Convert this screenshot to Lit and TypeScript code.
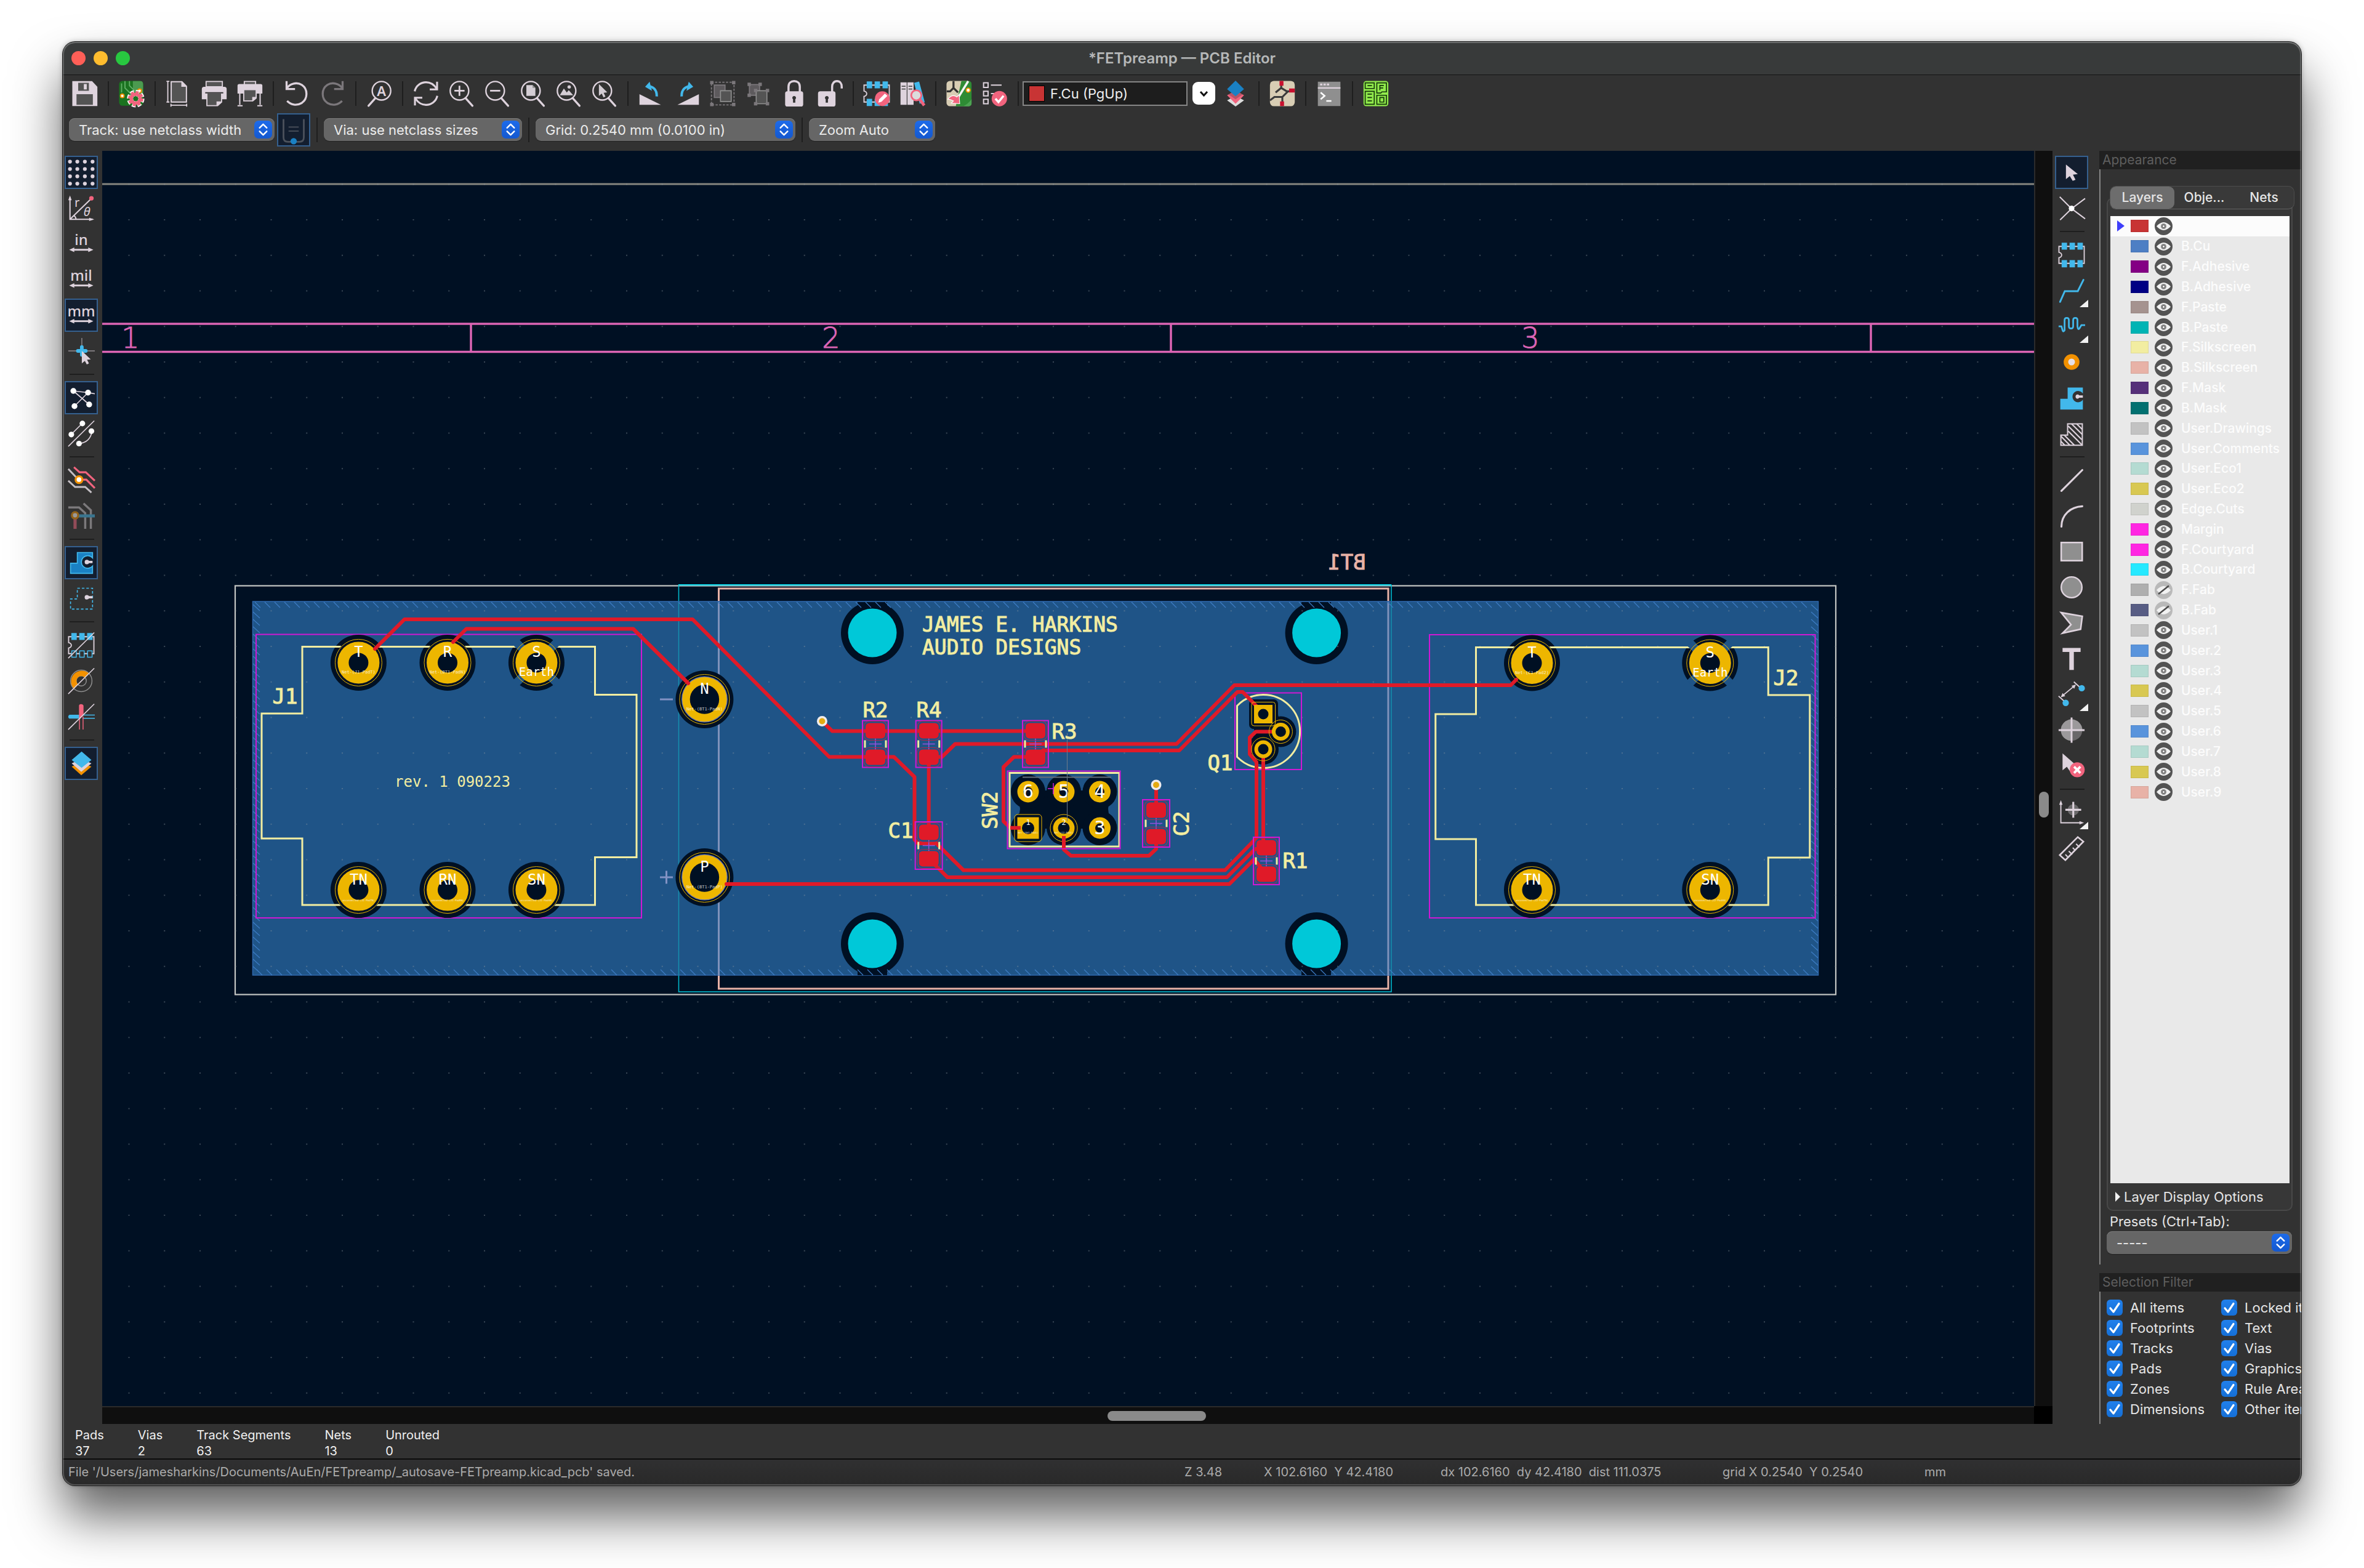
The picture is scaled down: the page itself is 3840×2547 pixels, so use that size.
import { LitElement, html, svg, css, nothing } from "lit";
import { customElement, property, state } from "lit/decorators.js";
import { classMap } from "lit/directives/class-map.js";
import { styleMap } from "lit/directives/style-map.js";

/* ---------- icon palette ---------- */
const W = "#ded3dd";
const G = "#8f8f8f";
const K = "#545454";
const B = "#42b8eb";
const DB = "#1a81c4";
const P = "#f2647e";
const O = "#f29100";

const magnifier = (inner: unknown, flip = false) => svg`
  <g fill="none" stroke=${W} stroke-width="1.3" stroke-linecap="round">
    <circle cx=${flip ? 14 : 10} cy="9.5" r="8.2"/>
    <path d=${flip ? "M8.6 16 2.5 22.8" : "M15.4 16 21.5 22.8"} stroke-width="1.8"/>
  </g>${inner}`;

const footprint = (extra: unknown, hollow = false) => svg`
  <path d="M3 4.5H.8v5.2q2.4.6 2.4 2.4T.8 14.5v5H23.2v-15z" fill="none" stroke=${W} stroke-width="1"/>
  <g fill=${B}><path d="M3.2 1.2h4.8v6.2H3.2zM10.2 1.2H15v6.2h-4.8zM17.2 1.2H22v6.2h-4.8z"/></g>
  <g fill=${hollow ? "#323232" : B} stroke=${B} stroke-width=".8"><path d="M3.6 17h4v5.6h-4zM10.6 17h4v5.6h-4zM17.6 17h4v5.6h-4z"/></g>${extra}`;

const slash = svg`<path d="M.5 23.5 23.5 .8" stroke=${W} stroke-width=".9"/>`;

const ICONS: Record<string, unknown> = {
  save: svg`<path d="M.8 1h17.5l4.7 5v17H.8z" fill=${W}/><path d="M6 2.5h9.5v7H6zM4.5 12.5h14.5v9.5H4.5z" fill=${K}/><path d="M11 3.5h2.6v4.8H11z" fill=${W}/>`,
  setup: svg`<rect x=".8" y=".8" width="21.5" height="22" rx="3" fill="#1b7320"/><path d="M13 1h7q2 0 2 3v10h-4l-5-5z" fill="#4c9a50"/>
    <g fill="none" stroke="#63b068" stroke-width="1"><path d="M6 1v6l5 5v4M10 1v4l5 5"/><path d="M3 3v8"/></g><circle cx="3.6" cy="14" r="1.6" fill="#fff" stroke=${O}/><circle cx="19" cy="9.5" r="1.6" fill="#fff" stroke=${O}/>
    <circle cx="15.5" cy="16.5" r="5" fill="none" stroke="#fff" stroke-width="5.5" stroke-dasharray="2.6 1.32"/><circle cx="15.5" cy="16.5" r="4" fill="none" stroke=${P} stroke-width="3"/><circle cx="15.5" cy="16.5" r="5.5" fill="none" stroke=${P} stroke-width="2.6" stroke-dasharray="2.4 1.92"/>`,
  page: svg`<path d="M5.5 1.5h9.5l4 4v14H5.5z" fill=${K} stroke=${W} stroke-width="1.1"/><path d="M14.5 1v5H19z" fill=${W}/><path d="M2.5 1.5v18M1.3 1.2h2.6M1.3 19.5h2.6M5.5 22.3h13.5M5.3 21v2.6M19.2 21v2.6" stroke=${W} stroke-width="1" fill="none"/>`,
  print: svg`<path d="M4.8 1.3h14.4V6H4.8z" fill=${K} stroke=${W}/><path d="M1 8q0-2 2-2h18q2 0 2 2v9H1z" fill=${W}/><path d="M5.5 11.5h13v8l-3.5 3.2H5.5z" fill=${K} stroke=${W}/><path d="M4 11.3h16" stroke="#323232"/><path d="M14 23v-4h5z" fill=${W}/>`,
  plot: svg`<path d="M7 1.3h10V4.5H7z" fill=${K} stroke=${W}/><path d="M1 5q0-1.5 1.5-1.5h19Q23 3.5 23 5v7H1z" fill=${W}/><path d="M6.5 8.5h11v7.5l-3 2.5h-8z" fill=${K} stroke=${W}/><path d="M14 19v-4h4z" fill=${W}/><path d="M3 12v10M21 12v10M1 22.8h4.5M18.5 22.8H23" stroke=${W} stroke-width="1.1"/>`,
  undo: svg`<path d="M3 7.5C6 3 12 1.5 16.5 4.3 22 8 22 16.5 16.5 20.3 12 23 6.5 22 3.5 18.5M3 1v7h7.5" fill="none" stroke=${W} stroke-width="1.8"/>`,
  redo: svg`<path d="M21 7.5C18 3 12 1.5 7.5 4.3 2 8 2 16.5 7.5 20.3 12 23 17.5 22 20.5 18.5M21 1v7h-7.5" fill="none" stroke="#7b777b" stroke-width="1.8"/>`,
  find: magnifier(svg`<text x="14" y="14" text-anchor="middle" class="itxt" font-size="12" font-weight="600" fill=${W}>A</text>`, true),
  refresh: svg`<path d="M2 10C3 5 7.5 2 12 2c4 0 7 2 9.3 5.5M21.8 1.5v6.8h-6.5M22 14c-1 5-5.5 8-10 8-4 0-7-2-9.3-5.5M2.2 22.5v-6.8h6.5" fill="none" stroke=${W} stroke-width="1.7"/>`,
  zin: magnifier(svg`<path d="M10 5v9M5.5 9.5h9" stroke=${W} stroke-width="1.5"/>`),
  zout: magnifier(svg`<path d="M5.5 9.5h9" stroke=${W} stroke-width="1.5"/>`),
  zfit: magnifier(svg`<path d="M6 4.5h5.5l2.5 2.5v7H6z" fill="#d4cdd4"/><path d="M11.5 4.5v2.5H14z" fill="#8f8f8f"/>`),
  zobj: magnifier(svg`<path d="M4 13.5l3.6-6 2.6 3.5 1.7-2 4 4.5z" fill="#d4cdd4"/><circle cx="12.3" cy="6.2" r="1.5" fill="#d4cdd4"/>`),
  zsel: magnifier(svg`<path d="M7 3.5v10.5l2.5-2 1.6 3.4 1.7-.8-1.6-3.3 3.2-.4z" fill="#d4cdd4"/>`),
  rccw: svg`<path d="M1.5 12.5 20.5 22H1.5z" fill=${W}/><path d="M10.5 1.5 6.5 6l6 3.5z" fill=${B}/><path d="M8.5 5.5c5 0 8.5 3 8.3 9" fill="none" stroke=${B} stroke-width="2.2"/>`,
  rcw: svg`<path d="M22.5 12.5 3.5 22h19z" fill=${W}/><path d="M13.5 1.5 17.5 6l-6 3.5z" fill=${B}/><path d="M15.5 5.5c-5 0-8.5 3-8.3 9" fill="none" stroke=${B} stroke-width="2.2"/>`,
  group: svg`<path d="M2 2h20v20H2z" fill="none" stroke="#7b777b" stroke-dasharray="2 1.2"/><path d="M4.5 4.5h9.5v11H4.5z" fill="#5d5a5d" stroke="#7b777b"/><path d="M10 9.5h9.5V19H10z" fill=${K} stroke=${G} stroke-width=".9"/><path d="M.8.8h3v3h-3zM20.2.8h3v3h-3zM.8 20.2h3v3h-3zM20.2 20.2h3v3h-3z" fill="#7b777b"/>`,
  ungroup: svg`<path d="M4 4h9v9.5H4z" fill="#5d5a5d" stroke="#7b777b"/><path d="M10 9.5h9.5V21H10z" fill=${K} stroke=${G} stroke-width=".9"/><path d="M2.3 2.3h3v3h-3zM12 2.3h3v3h-3zM2.3 12h3v3h-3zM8 7.8h3v3H8zM18.5 7.8h3v3h-3zM8 19.5h3v3H8zM18.5 19.5h3v3h-3z" fill="#7b777b"/>`,
  lock: svg`<path d="M7 11V5.8C7 2.6 9.2 1 12 1s5 1.6 5 4.8V11" fill="none" stroke=${W} stroke-width="1.9"/><rect x="4" y="10" width="16" height="13.5" rx="2" fill=${W}/><path d="M12 14.2a1.6 1.6 0 0 1 1 2.9V20h-2v-2.9a1.6 1.6 0 0 1 1-2.9z" fill="#323232"/>`,
  unlock: svg`<path d="M14 11V6c0-3 1.7-5 4.3-5s4.2 2 4.2 5v1.5" fill="none" stroke=${W} stroke-width="1.9"/><rect x="1.5" y="10" width="15.5" height="13.5" rx="2" fill=${W}/><path d="M9.3 14.2a1.6 1.6 0 0 1 1 2.9V20h-2v-2.9a1.6 1.6 0 0 1 1-2.9z" fill="#323232"/>`,
  fpedit: footprint(svg`<circle cx="17" cy="16.5" r="6.5" fill=${P}/><path d="M13.5 20l.8-3 5-5 2.2 2-5.2 5.2z" fill="#fff"/>`),
  fplib: svg`<path d="M1.5 2h5.5v20H1.5zM7.6 2h5.5v20H7.6z" fill=${W}/><path d="M2.5 5.5h3.5M2.5 8h3.5M8.6 5.5H12M8.6 8H12" stroke=${K}/><path d="M13.5 2.5l4.5-1.2 5 18.5-4.5 1.2z" fill=${B}/><circle cx="15.5" cy="13.5" r="4.5" fill="#dcdcdc" stroke=${P} stroke-width="1.5"/><path d="M18.5 17l4 5.5" stroke=${P} stroke-width="2.6"/>`,
  update: svg`<rect x=".8" y=".8" width="22" height="22.4" rx="3" fill="#d8cdb4"/><path d="M14 .8h6q3 0 3 3v16.5q0 3-3 3H9z" fill="#2e8b34"/><path d="M16 23q4-2 7-6v4q0 2-3 2.2z" fill="#4da352"/><path d="M7 1v6l-3 3H1M7 7l4 4" fill="none" stroke="#323232" stroke-width="1.8"/><path d="M20 1 9 19" stroke="#f4f4f4" stroke-width="2"/><path d="M2 17q4-5 8-2l2-2 .5 8-7.5-.5 2-2q-3-1.5-5-1.5z" fill=${P} stroke="#fff" stroke-width=".6"/><circle cx="20" cy="9" r="1.8" fill="#fff" stroke=${O}/>`,
  drc: svg`<path d="M2 2.5h4v4H2zM2 10h4v4H2zM2 17h4v4H2z" fill="none" stroke=${W} stroke-width="1.1"/><path d="M8.5 4.5H18M8.5 12H13" stroke=${W} stroke-width="1.2"/><circle cx="16" cy="16.5" r="6.8" fill=${P}/><path d="M12.5 16.5l2.7 3 4.5-5.5" fill="none" stroke="#fff" stroke-width="1.9"/>`,
  pair: svg`<path d="M12 14 19.5 18 12 23.5 4.5 18z" fill="#dcdcdc"/><path d="M12 9l7.5 4.5L12 21l-7.5-7.5z" fill=${P}/><path d="M12 5l7.5 7L12 17 4.5 12z" fill="#323232" opacity=".3"/><path d="M12 .5 19.5 8 12 14.5 4.5 8z" fill=${DB}/>`,
  sch: svg`<rect x="1" y=".8" width="22" height="22.4" rx="3.5" fill="#d8cdb4"/><path d="M11 1v6l-5 4M11 7l5 3h6M12 15l5-5M12 15v8M12 15H5l-4 3" fill="none" stroke="#3b3b3b" stroke-width="1.7"/><path d="M9.5.8H13V5H9.5zM18 7.5h5V11h-5zM10 19h3.5v4H10z" fill="#c8102e"/>`,
  term: svg`<path d="M2 1.5h20V23H2z" fill=${G}/><path d="M2 7h20" stroke=${W} stroke-width="1.3"/><path d="M4 4h2M7 4h2M10 4h2" stroke=${W} stroke-width="1.6"/><path d="M4.5 11l3.5 3-3.5 3M9.5 18.5h4.5" fill="none" stroke="#fff" stroke-width="1.4"/>`,
  fab: svg`<rect x="1" y=".8" width="22" height="22.4" rx="2.5" fill="#91ea4c"/><g fill="none" stroke="#14360a" stroke-width=".9"><path d="M2.5 2.5h8v5h-8zM2.5 10h8v11.5h-8zM12.8 2.5h8.5v8h-4l-1 1h-3.5zM12.8 13.5h8.5v8h-8.5z"/><path d="M4.5 5h4M4.5 12.5h4M4.5 15.5h4M4.5 18.5h4M15.5 9V4.8h3.5M15.5 7h3M15.5 15.5h3.5v4h-3.5z"/></g>`,
  autow: svg`<path d="M3 2.5v16q0 4 4 4h10q4 0 4-4v-16" fill="none" stroke="#4c525c" stroke-width="1.5"/><path d="M7.5 9.5h9M7.5 13h9" stroke="#4c525c" stroke-width="1"/><circle cx="12" cy="22" r="2.8" fill=${DB}/>`,
  grid: svg`<g fill=${W}>${[2.5, 9, 15.5, 22].map((y) => [2, 8.5, 15.2, 22].map((x) => svg`<circle cx=${x} cy=${y} r="1.7"/>`))}</g>`,
  polar: svg`<path d="M2 2.5V22H22M2 22 20.5 4M5 18.5q2.3 1 2.3 3.5" fill="none" stroke=${W} stroke-width="1.1"/><path d="M2 .8 3.5 5H.5zM23.5 22l-4.5 1.4v-2.8z" fill=${W}/><circle cx="21" cy="3.3" r="2" fill=${P}/><text x="6" y="11" class="itxt" font-size="11" fill=${W}>r</text><text x="14" y="19" class="itxt" font-size="11" font-style="italic" fill=${W}>θ</text>`,
  curs: svg`<path d="M12.5.5V12M.5 12H24" stroke="#7b777b"/><path d="M12.5 8.5v7M9 12h7" stroke=${B} stroke-width="3.2" stroke-linecap="round"/><path d="M12.5 12v11l2.7-2.2 1.7 3.2 1.9-1-1.7-3.2 3.3-.3z" fill=${W}/>`,
  rats: svg`<path d="M5 6l13 1.5 6 1M5 6l14 12M18 7.5 6 19.5" stroke=${W} stroke-width=".9" fill="none"/><g fill="#fff"><circle cx="5" cy="6" r="2.6"/><circle cx="18" cy="7.5" r="2.6"/><circle cx="6" cy="19.5" r="2.6"/><circle cx="19" cy="18" r="2.6"/></g>`,
  crats: svg`<path d="M3 13 13 3M.5 23.5 23.5.8M10 21q10-1 11.5-11" stroke=${W} stroke-width=".9" fill="none"/><g fill="#fff"><circle cx="3.2" cy="13" r="2.5"/><circle cx="13" cy="3.2" r="2.5"/><circle cx="10" cy="21" r="2.5"/><circle cx="21" cy="10" r="2.5"/></g>`,
  net: svg`<path d="M.5 2 9 11M.5 12.5 6.500 18h9l5.500 5" fill="none" stroke="#c4bfc4" stroke-width="1.6"/><path d="M5.5.5 10.5 5H16l8 7.500M11 11.500h5.500L24 19" fill="none" stroke=${P} stroke-width="1.7"/><circle cx="10" cy="11.5" r="3" fill="#fff" stroke=${O} stroke-width="1.8"/>`,
  hidenet: svg`<g opacity=".5"><path d="M.5 4.5h9.5l5.5 5V23.5M14 1l6.5 6v16.5" fill="none" stroke="#c4bfc4" stroke-width="1.9"/><path d="M6.5 12H24" stroke=${B} stroke-width="2.6"/><path d="M6.5 12v11.5" stroke=${P} stroke-width="2.8"/><circle cx="6.5" cy="11.5" r="2.8" fill="#fff" stroke=${O} stroke-width="1.8"/></g>`,
  zfill: svg`<path d="M8.5 3H22v4.8a5.6 5.6 0 1 0 0 7.2v6.5H2.5v-9h6z" fill=${DB} stroke=${B} stroke-width=".9"/><path d="M17 9.4q1.2 0 1.9 1H22v2h-3.1q-.7 1-1.9 1a2 2 0 0 1 0-4z" fill=${W}/>`,
  zout2: svg`<path d="M8.5 3H22v18.5H2.5v-9h6z" fill="none" stroke=${B} stroke-width=".9" stroke-dasharray="2.3 1.7"/><path d="M17 9q1.2 0 1.9 1H22v2h-3.1q-.7 1-1.9 1a2 2 0 0 1 0-4z" fill=${W}/>`,
  fpo: footprint(slash, true),
  padso: svg`<circle cx="12" cy="12" r="9.5" fill="none" stroke=${G} stroke-width=".8"/><circle cx="12" cy="12" r="4.5" fill="none" stroke=${G} stroke-width=".8"/><path d="M5.3 18.7A9.5 9.5 0 0 1 18.7 5.3L15 9a4.2 4.2 0 0 0-6 6z" fill=${O}/>${slash}`,
  trko: svg`<path d="M2 10.3h9v3.5H2q-1.5 0-1.5-1.7T2 10.3z" fill=${B}/><path d="M13 10.6H24M13 13.5H24" stroke=${B} stroke-width=".8"/><path d="M10 12V2.5q0-1.5 1.8-1.5t2.2 1.5V11l-4 4z" fill=${P}/><path d="M10.4 14v9.5M13.6 12v11.5" stroke=${P} stroke-width=".8"/>${slash}`,
  layers: svg`<path d="M12 11l9 3.8L12 22.5 3.5 14.8z" fill=${O}/><path d="M12 8l9 4L12 19.5 3.5 12z" fill=${W}/><path d="M12.3 1.5 21 9l-8.7 7L3.5 9z" fill=${B}/>`,
  arrow: svg`<path d="M7 5v13l3.4-2.7 2.6 4.2 2.5-1-2.3-4.5 4.3-.5z" fill=${W}/>`,
  xnet: svg`<path d="M1.5 2 12 12.5 1.8 22.5M24 3.5 12 12.5 24 21.5" fill="none" stroke=${W} stroke-width="1.1"/><circle cx="12" cy="12.3" r="2.5" fill="#fff"/>`,
  foot: footprint(nothing),
  route: svg`<path d="M1.8 22 6 12.5h11.5L22.5 2.5" fill="none" stroke=${B} stroke-width="1.6" stroke-linecap="round"/>`,
  tune: svg`<path d="M.5 12H3l1 3.5q.5 2 1.8 0V6.5q0-2 1.9-2t1.9 2V12q0 2 1.9 2t1.9-2V6.5q0-2 1.9-2t1.9 2V12q.5 4 2 1.500l1.500-2.500H24" fill="none" stroke=${B} stroke-width="1.5"/>`,
  via: svg`<circle cx="12" cy="12" r="5" fill="#e6e0e6" stroke=${O} stroke-width="4"/>`,
  zone: svg`<path d="M8.5 3H22v5.3a5 5 0 1 0 0 5.5V22.5H2V13h6.5z" fill=${B}/><path d="M17 9.2q1.2 0 1.8.8H22v2h-3.2q-.6.9-1.8.9a1.9 1.9 0 0 1 0-3.7z" fill=${W}/>`,
  rule: svg`<path d="M8.5 3.5h13v19H2.5v-9h6z" fill="none" stroke=${W} stroke-width="1.1"/><path d="M9 5.5 21 17.5M12 3.5l9.5 9.5M16.5 3.5 21.5 8.5M9 10l12 12M5.5 13.5l9 9M2.5 14.5l8 8M2.5 19l3.5 3.5" stroke=${W} stroke-width="1.2"/>`,
  line: svg`<path d="M3 21.5 21.5 3" stroke=${W} stroke-width="1.7" stroke-linecap="round"/>`,
  arc: svg`<path d="M3 21.5C3 11 11 4 21.5 3.5" fill="none" stroke=${W} stroke-width="1.7" stroke-linecap="round"/>`,
  rect: svg`<path d="M2.8 4h18.6v16H2.8z" fill=${G} stroke=${W} stroke-width="1.4"/>`,
  circle: svg`<circle cx="12" cy="12" r="9.2" fill=${G} stroke=${W} stroke-width="1.3"/>`,
  poly: svg`<path d="M2.8 2.8 21.5 6 20 17.5 4 21l7.5-7.5z" fill=${G} stroke=${W} stroke-width="1.4"/>`,
  text: svg`<path d="M4 2.5h16v3.5h-6v16h-4V6H4z" fill=${W}/>`,
  dim: svg`<path d="M3 14 15 4M.5 13.5l5.5 5M14 .8l6 5.5" stroke=${W} stroke-width="1" fill="none"/><path d="M2.5 14.5 4 10.8l2.4 2.7zM15.8 3.3l-1.5 3.7-2.4-2.7z" fill=${W}/><circle cx="6.8" cy="19.5" r="2.8" fill=${B}/><circle cx="21" cy="6.5" r="2.8" fill=${B}/>`,
  target: svg`<circle cx="12" cy="12" r="9.5" fill="#6a686a"/><path d="M2.5 12A9.5 9.5 0 0 1 21.5 12z" fill="#9b999b"/><path d="M2.5 12h9.5v9.5A9.5 9.5 0 0 1 2.5 12z" fill="#9b999b"/><path d="M12 .8v22.4M.5 12h23" stroke=${W} stroke-width="1.6"/>`,
  del: svg`<path d="M4 1v15l3.8-3.2 3.2 4.7 2.5-1.2-2.2-4.3 4.7-.5z" fill=${W}/><circle cx="17" cy="15.5" r="6.6" fill=${P}/><path d="M14.2 12.7l5.6 5.6M19.8 12.7l-5.6 5.6" stroke="#fff" stroke-width="2.1"/>`,
  origin: svg`<path d="M2.5 3v18H21" fill="none" stroke=${W} stroke-width="1"/><path d="M2.5 1 4 5H1zM23 21l-4 1.5v-3z" fill=${W}/><circle cx="13.5" cy="9.5" r="5" fill="#6a686a"/><path d="M13.5 2.5v14M6.5 9.5h14" stroke=${W} stroke-width="1.7"/>`,
  ruler: svg`<path d="M1.5 18 17.5 2l5 4L6.5 22.500z" fill="none" stroke=${W} stroke-width="1.4"/><path d="M6.5 17.5l2 2M9.5 14.5l3 3M13 11.500l2 2M16 8l3 3" stroke=${W} stroke-width="1.1"/>`,
};

const unitIcon = (label: string) => svg`
  <text x="12" y="13" text-anchor="middle" class="itxt" font-size="13" font-weight="500" fill=${W}>${label}</text>
  <path d="M4 17.3h16" stroke=${W} stroke-width="1.6"/><path d="M1.3 17.3l4.500-2v4zM22.700 17.3l-4.500-2v4z" fill=${W}/>`;
ICONS.in = unitIcon("in");
ICONS.mil = unitIcon("mil");
ICONS.mm = unitIcon("mm");

interface Tool { icon?: string; label?: string; on?: boolean; more?: boolean }
const SEP: Tool = {};
const t = (icon: string, label: string, opt: Partial<Tool> = {}): Tool => ({ icon, label, ...opt });

const TOP_TOOLS: Tool[] = [
  t("save", "Save"), SEP, t("setup", "Board setup"), SEP,
  t("page", "Page settings"), t("print", "Print"), t("plot", "Plot"), SEP,
  t("undo", "Undo"), t("redo", "Redo"), SEP, t("find", "Find"), SEP,
  t("refresh", "Refresh"), t("zin", "Zoom in"), t("zout", "Zoom out"), t("zfit", "Zoom to fit"),
  t("zobj", "Zoom to objects"), t("zsel", "Zoom to selection"), SEP,
  t("rccw", "Rotate counterclockwise"), t("rcw", "Rotate clockwise"), t("group", "Group"),
  t("ungroup", "Ungroup"), t("lock", "Lock"), t("unlock", "Unlock"), SEP,
  t("fpedit", "Footprint editor"), t("fplib", "Footprint library browser"), SEP,
  t("update", "Update PCB from schematic"), t("drc", "Design rules checker"), SEP,
];
const TOP_TOOLS_END: Tool[] = [
  t("pair", "Layer pair"), SEP, t("sch", "Open schematic"), SEP,
  t("term", "Scripting console"), SEP, t("fab", "Fabrication files"),
];
const LEFT_TOOLS: Tool[] = [
  t("grid", "Show grid", { on: true }), t("polar", "Polar coordinates"), t("in", "Inches"),
  t("mil", "Mils"), t("mm", "Millimeters", { on: true }), t("curs", "Full-window crosshairs"), SEP,
  t("rats", "Show ratsnest", { on: true }), t("crats", "Curved ratsnest"), SEP,
  t("net", "Net highlighting"), t("hidenet", "Net color mode"), SEP,
  t("zfill", "Filled zones", { on: true }), t("zout2", "Zone outlines"), SEP,
  t("fpo", "Sketch footprints"), t("padso", "Sketch pads"), t("trko", "Sketch tracks"), SEP,
  t("layers", "Appearance manager", { on: true }),
];
const RIGHT_TOOLS: Tool[] = [
  t("arrow", "Select", { on: true }), t("xnet", "Local ratsnest"), SEP,
  t("foot", "Add footprint"), t("route", "Route tracks", { more: true }),
  t("tune", "Tune length", { more: true }), t("via", "Add via"), t("zone", "Add zone"), t("rule", "Add rule area"), SEP,
  t("line", "Draw line"), t("arc", "Draw arc"), t("rect", "Draw rectangle"), t("circle", "Draw circle"),
  t("poly", "Draw polygon"), t("text", "Add text"), t("dim", "Add dimension", { more: true }),
  t("target", "Layer alignment target"), t("del", "Interactive delete"), SEP,
  t("origin", "Set origin", { more: true }), t("ruler", "Measure"),
];

const LAYERS: [string, string, boolean?][] = [
  ["F.Cu", "#c83434"], ["B.Cu", "#4d7fc4"], ["F.Adhesive", "#840084"], ["B.Adhesive", "#000084"],
  ["F.Paste", "#a5938f"], ["B.Paste", "#00b4b4"], ["F.Silkscreen", "#f2eda1"], ["B.Silkscreen", "#e8b2a7"],
  ["F.Mask", "#56307a"], ["B.Mask", "#027070"], ["User.Drawings", "#c2c2c2"], ["User.Comments", "#5994dc"],
  ["User.Eco1", "#b4dbd2"], ["User.Eco2", "#d8c852"], ["Edge.Cuts", "#d0d2cd"], ["Margin", "#ff26e2"],
  ["F.Courtyard", "#ff26e2"], ["B.Courtyard", "#26e9ff"], ["F.Fab", "#afafaf", true], ["B.Fab", "#585d84", true],
  ["User.1", "#c2c2c2"], ["User.2", "#5994dc"], ["User.3", "#b4dbd2"], ["User.4", "#d8c852"],
  ["User.5", "#c2c2c2"], ["User.6", "#5994dc"], ["User.7", "#b4dbd2"], ["User.8", "#d8c852"], ["User.9", "#e8b2a7"],
];

const buttonStyles = css`
  button, select, input { font: inherit; color: inherit; margin: 0; }
  button { border: 0; padding: 0; background: none; }
`;

@customElement("tool-button")
class ToolButton extends LitElement {
  @property() icon = "";
  @property() label = "";
  @property({ type: Boolean }) on = false;
  @property({ type: Boolean }) more = false;

  static styles = [buttonStyles, css`
    :host { display: block; flex: none; }
    .tool {
      position: relative; display: grid; place-items: center; box-sizing: border-box;
      width: 54px; height: 54px; border: 2px solid transparent;
    }
    .tool.on { background: #131e2f; border-color: #35608f; }
    .glyph { width: 44px; height: 44px; overflow: visible; }
    .itxt { font-family: "Noto Sans", sans-serif; }
    .more { position: absolute; right: -2px; bottom: -2px; width: 14px; height: 12px; }
  `];

  render() {
    return html`<button class=${classMap({ tool: true, on: this.on })} aria-label=${this.label} aria-pressed=${this.on ? "true" : "false"}>
      <svg class="glyph" viewBox="0 0 24 24">${ICONS[this.icon]}</svg>
      ${this.more ? html`<svg class="more" viewBox="0 0 14 12"><path d="M14 0v12H0z" fill="#f2f2f2"/></svg>` : nothing}
    </button>`;
  }
}

@customElement("pop-select")
class PopSelect extends LitElement {
  @property() label = "";
  @property() value = "";

  static styles = [buttonStyles, css`
    :host { display: block; position: relative; }
    .field {
      appearance: none; display: block; width: 100%; height: 37px; box-sizing: border-box;
      padding: 0 40px 0 16px; border: 0; border-radius: 9px; background: #666;
      box-shadow: inset 0 1px 0 #7c7c7c, 0 1px 1px #222; color: #ececec;
    }
    .step {
      position: absolute; top: 4px; right: 4px; width: 29px; height: 29px; border-radius: 7px;
      background: linear-gradient(#1d6bea, #1458cf); pointer-events: none;
    }
  `];

  render() {
    return html`<select class="field" aria-label=${this.label}><option>${this.value}</option></select>
      <svg class="step" viewBox="0 0 30 30"><path d="M9 12l6-6 6 6M9 18l6 6 6-6" fill="none" stroke="#fff" stroke-width="2.5" stroke-linecap="round" stroke-linejoin="round"/></svg>`;
  }
}

/* ---------- board drawing ---------- */
const BG = "#001023";
const GOLD = "#edb600";
const SILK = "#f2eda1";
const MAG = "#cf18d4";
const RED = "#e01a28";
const ZONE = "#1f5487";

const tracks = [
  "M609 1054 657 1006H1125L1347 1229.5H1452L1485.5 1262V1364L1491 1370H1521L1565 1413.5H1990L2041 1361V1238L2030 1225V1198L2040 1188.5H2074",
  "M736 1043 757.5 1021.5H1028.5L1118 1110",
  "M1180 1436H1997L2037 1396 2057 1420",
  "M1508.7 1395 1539 1425H1993L2039 1379H2057",
  "M2052 1230V1378",
  "M1508.7 1352V1229.5",
  "M1335.4 1171.5 1352 1187.6H1682",
  "M1508.7 1229.5H1530L1551.5 1208.5H1911L2005 1113H2454L2463 1104",
  "M1682 1229.5 1694 1219H1915.5L2010 1124H2018.6L2041 1147",
  "M1682 1229.5H1647L1630 1246V1334L1641 1344.7H1660",
  "M1728 1356V1380L1739.5 1390H1866.4L1878 1379V1359",
  "M1878 1315V1275",
];

const chips: [number, number, number, number][] = [
  [1422, 1208.5, 42, 76], [1508.7, 1208.5, 42, 76], [1682, 1208.5, 42, 76],
  [1508.7, 1373.5, 44, 77], [1878, 1337.5, 44, 77], [2057, 1398.5, 42, 77],
];

type Pad = [number, number, string, string];
const jackPads: Pad[] = [
  [582.4, 1076.4, "T", "Net-(J1-PadT)"], [727, 1076.4, "R", "Net-(BT1-PadN)"], [871.4, 1076.4, "S", "Earth"],
  [582.4, 1445.6, "TN", "unconnected-(J1-PadTN)"], [727, 1445.6, "RN", "unconnected-(J1-PadRN)"], [871.4, 1445.6, "SN", "unconnected-(J1-PadSN)"],
  [2488.5, 1077, "T", "Net-(C1-Pad2)"], [2777.8, 1077, "S", "Earth"],
  [2488.5, 1445.6, "TN", "unconnected-(J2-PadTN)"], [2777.8, 1445.6, "SN", "unconnected-(J2-PadSN)"],
];
const batteryPads: Pad[] = [[1144.4, 1136, "N", "Net-(BT1-PadN)"], [1144.4, 1425, "P", "Net-(BT1-PadP)"]];

const hatch = () => {
  const d: string[] = [];
  for (let x = 414; x < 2940; x += 16) d.push(`M${x} 978l9 9M${x + 3} 1575l9 9`);
  for (let y = 982; y < 1574; y += 12) d.push(`M411 ${y}l11 10M2942 ${y}l11 10`);
  return d.join("");
};

@customElement("board-view")
class BoardView extends LitElement {
  static styles = css`
    :host { display: block; overflow: hidden; min-width: 0; min-height: 0; contain: size; }
    .sheet { display: block; width: 100%; height: 100%; background: #001023; }
    .ref { font-family: "DejaVu Sans Mono", monospace; font-size: 34px; fill: #f2eda1; stroke: #f2eda1; stroke-width: 1px; text-anchor: middle; }
    .title { font-size: 33px; text-anchor: start; }
    .rev { font-size: 24px; stroke-width: 0; }
    .back { fill: #e8b2a7; stroke: #e8b2a7; }
    .num { font-size: 46px; font-family: "DejaVu Sans", sans-serif; font-weight: 200; fill: #dc64b4; stroke: #dc64b4; }
    .pin { font-family: "DejaVu Sans Mono", monospace; font-size: 24px; fill: #fff; text-anchor: middle; }
    .key { font-size: 30px; }
    .small { font-size: 12px; }
    .earth { font-size: 19px; }
    .net { font-size: 7px; opacity: 0.75; }
    .tiny { font-size: 4px; opacity: 0.75; }
  `;

  private pad([x, y, , net]: Pad) {
    return svg`
      <circle cx=${x} cy=${y} r="39" fill=${BG}/>
      ${net === "Earth" ? svg`<path d="M${x - 32} ${y - 32}l64 64M${x + 32} ${y - 32}l-64 64" stroke=${ZONE} stroke-width="13"/>` : nothing}
      <circle cx=${x} cy=${y} r="38" fill="none" stroke=${GOLD} stroke-width="1"/>
      <circle cx=${x} cy=${y} r="25" fill=${BG} stroke=${GOLD} stroke-width="18"/>`;
  }

  private battery([x, y]: Pad) {
    return svg`
      <circle cx=${x} cy=${y} r="47" fill=${BG}/>
      <circle cx=${x} cy=${y} r="40.5" fill="none" stroke=${GOLD} stroke-width="1"/>
      <circle cx=${x} cy=${y} r="37.5" fill="#5a6fc0"/>
      <circle cx=${x} cy=${y} r="30" fill=${BG} stroke=${GOLD} stroke-width="12.5"/>`;
  }

  private padText([x, y, name, net]: Pad) {
    const earth = net === "Earth";
    return svg`
      <text class="pin" x=${x} y=${y - 9}>${name}</text>
      <text class=${"pin " + (earth ? "earth" : net.length > 14 ? "tiny" : "net")} x=${x} y=${y + (earth ? 22 : 18)}>${net}</text>`;
  }

  private chip([x, y, w, h]: [number, number, number, number]) {
    const o = 21.5;
    return svg`
      <path d="M${x - 17} ${y - 6}v12M${x + 17} ${y - 6}v12" stroke=${SILK} stroke-width="3"/>
      <rect x=${x - w / 2} y=${y - h / 2} width=${w} height=${h} fill="none" stroke=${MAG} stroke-width="2"/>
      <path d="M${x - 10} ${y}h20M${x} ${y - 9}v18" stroke="#9450dc" stroke-width="1.5"/>
      ${[-o, o].map((d) => svg`
        <rect x=${x - 19} y=${y + d - 15.5} width="38" height="31" rx="9" fill="none" stroke="#a82a4c" stroke-width="1.2"/>
        <rect x=${x - 16} y=${y + d - 12.5} width="32" height="25" rx="6" fill=${RED}/>`)}`;
  }

  private switchPins() {
    const top = [[1670, "6"], [1728, "5"], [1786.5, "4"]] as [number, string][];
    return svg`
      <path d="M1652 1284h152l-4 30 4 32h-152l5-32z" fill=${BG}/>
      ${[1670, 1728, 1786.5].map((x) => [1286, 1345].map((y) => svg`<circle cx=${x} cy=${y} r="28" fill=${BG}/>`))}
      <rect x="1640" y="1255.5" width="178" height="119.5" fill="none" stroke=${SILK} stroke-width="3"/>
      <rect x="1636.5" y="1252.5" width="183" height="126" fill="none" stroke=${MAG} stroke-width="2"/>
      ${[...top.map(([x, n]) => [x, 1286, n]), [1786.5, 1345, "3"]].map(([x, y, n]) => svg`
        <circle cx=${x} cy=${y} r="12.5" fill=${BG} stroke=${GOLD} stroke-width="10"/>
        <text class="pin key" x=${x} y=${Number(y) + 10}>${n}</text>`)}
      <path d="M1711 1272v18M1702 1281h10" stroke="#d21edc" stroke-width="1.5"/>
      <rect x="1648" y="1323" width="44" height="44" rx="5" fill="none" stroke=${GOLD} stroke-width="1"/>
      <rect x="1652.5" y="1327.5" width="35" height="35" fill=${GOLD}/><circle cx="1670" cy="1345" r="10" fill=${BG}/>
      <circle cx="1728" cy="1345" r="22" fill="none" stroke=${GOLD} stroke-width="1"/>
      <circle cx="1728" cy="1345" r="13.5" fill=${BG} stroke=${GOLD} stroke-width="8"/>
      <text class="pin small" x="1670" y="1340">1</text><text class="pin small" x="1728" y="1340">2</text>
      <text class="pin tiny" x="1670" y="1354">Net-(SW2-Pad1)</text><text class="pin tiny" x="1728" y="1354">Net-(C2-Pad1)</text>`;
  }

  private transistor() {
    return svg`
      <rect x="2029" y="1136" width="47" height="48" rx="7" fill=${BG}/>
      <circle cx="2080.4" cy="1188.5" r="25" fill=${BG}/><circle cx="2052" cy="1217" r="25" fill=${BG}/>
      <path d="M2030 1160h46l4 30-28 28h-22l8-30z" fill=${BG}/>
      <path d="M2009.5 1146.5V1229.5A59.5 59.5 0 1 0 2009.5 1146.5z" fill="none" stroke=${SILK} stroke-width="3"/>
      <rect x="2006" y="1125.5" width="108" height="124.5" fill="none" stroke=${MAG} stroke-width="2"/>`;
  }

  private transistorPads() {
    return svg`
      <rect x="2033" y="1140.5" width="38.5" height="38.5" rx="4" fill="none" stroke=${GOLD} stroke-width="1"/>
      <rect x="2037" y="1145" width="30" height="30" fill=${GOLD}/><circle cx="2052" cy="1160" r="8.5" fill=${BG}/>
      ${[[2080.4, 1188.5], [2052, 1217]].map(([x, y]) => svg`
        <circle cx=${x} cy=${y} r="19" fill="none" stroke=${GOLD} stroke-width="1"/>
        <circle cx=${x} cy=${y} r="11.5" fill=${BG} stroke=${GOLD} stroke-width="6"/>`)}`;
  }

  render() {
    const holes = [[1417, 1028], [2138.6, 1028], [1417, 1533], [2138.6, 1533]];
    return html`<svg class="sheet" viewBox="166 245 3138 2039" preserveAspectRatio="xMidYMid slice" role="img" aria-label="Circuit board layout">
      <defs>
        <pattern id="dots" x="208.5" y="356" width="57.75" height="57.75" patternUnits="userSpaceOnUse">
          <rect width="2" height="2" fill="#8f98a0" opacity=".4"/>
        </pattern>
        <clipPath id="zoneclip"><rect x="411" y="978" width="2543" height="606"/></clipPath>
      </defs>
      <path d="M0 299H3600" stroke="#85857f" stroke-width="3"/>
      <path d="M0 526H3600M0 571.5H3600M765 526V571M1902 526V571M3039 526V571" stroke="#dc64b4" stroke-width="3.5"/>
      <text class="ref num" x="212" y="565">1</text><text class="ref num" x="1350" y="565">2</text><text class="ref num" x="2486" y="565">3</text>

      <rect x="382" y="951.5" width="2600" height="664" fill="none" stroke="#c4c6c4" stroke-width="2.2"/>
      <rect x="1102.5" y="950.5" width="1157.5" height="660.5" fill="none" stroke="#00b8cc" stroke-width="1.6"/>
      <path d="M1102 950H2260" stroke="#12d8ea" stroke-width="2"/>
      <rect x="1167.5" y="956" width="1087.5" height="650" fill="none" stroke="#e8b2a7" stroke-width="3"/>

      <rect x="410.5" y="977" width="2543" height="607" fill=${ZONE} stroke="#2f68ae" stroke-width="1.5"/>
      <path d="M1167.5 978V1584M2255 978V1584" stroke="#7f92bb" stroke-width="3"/>
      <path d="M1102.5 978V1584M2260 978V1584" stroke="#1590ae" stroke-width="1.5"/>
      <g clip-path="url(#zoneclip)" fill=${BG}>
        ${holes.map(([x, y]) => svg`<circle cx=${x} cy=${y} r="51"/>`)}
        <path d="M1393 978h48v8h-48zM2114 978h48v8h-48zM1393 1576h48v8h-48zM2114 1576h48v8h-48z"/>
      </g>
      <path d=${hatch()} stroke="#3d7cc4" stroke-width="1.2" fill="none"/>
      <rect x="0" y="0" width="3600" height="2600" fill="url(#dots)"/>
      ${holes.map(([x, y]) => svg`<circle cx=${x} cy=${y} r="39.5" fill="#00c8d8"/>`)}

      <rect x="416" y="1030.5" width="626" height="460.5" fill="none" stroke=${MAG} stroke-width="2"/>
      <rect x="2322" y="1031" width="626.5" height="460" fill="none" stroke=${MAG} stroke-width="2"/>
      ${jackPads.map(([x, y, , net]) => svg`<circle cx=${x} cy=${y} r="45.5" fill=${BG}/>${net === "Earth" ? svg`<path d="M${x - 33} ${y - 33}l66 66M${x + 33} ${y - 33}l-66 66" stroke=${ZONE} stroke-width="13"/>` : nothing}`)}
      <path d="M491 1050.5H966.5V1128.5H1034V1392.5H966.5V1470H491V1362H425V1159H491z" fill="none" stroke=${SILK} stroke-width="3"/>
      <path d="M2397.5 1051.5H2872.3V1129H2939.8V1393H2872.3V1470H2397.5V1363H2331.8V1160H2397.5z" fill="none" stroke=${SILK} stroke-width="3"/>
      ${jackPads.map((p) => this.pad(p))}
      ${this.transistor()}
      ${batteryPads.map((p) => this.battery(p))}
      <path d="M1072 1136h21M1072 1425h21M1082.5 1414.5v21" stroke="#8292c4" stroke-width="3"/>

      <g fill="none" stroke=${RED} stroke-width="6" stroke-linejoin="round" stroke-linecap="round">
        ${tracks.map((d) => svg`<path d=${d}/>`)}
      </g>
      ${[...jackPads, ...batteryPads].map((p) => this.padText(p))}
      ${this.switchPins()}
      <path d="M1641 1344.7H1658M1728 1358V1378" stroke=${RED} stroke-width="6"/>
      <path d="M1733.5 1191V1334" stroke="#6f7b88" stroke-width="1"/><path d="M1661 1262.5H1805" stroke="#66707a" stroke-width="2"/>
      ${this.transistorPads()}
      ${chips.map((c) => this.chip(c))}
      ${[[1335.4, 1171.5], [1878, 1275]].map(([x, y]) => svg`<circle cx=${x} cy=${y} r="8.5" fill="#f0ecec"/><circle cx=${x} cy=${y} r="5" fill="#e3aa12"/>`)}

      <text class="ref" x="463" y="1143">J1</text><text class="ref" x="2901" y="1113">J2</text>
      <text class="ref" x="1422" y="1165">R2</text><text class="ref" x="1509" y="1165">R4</text>
      <text class="ref" x="1729" y="1200">R3</text><text class="ref" x="1463" y="1361">C1</text>
      <text class="ref" x="2104" y="1410">R1</text><text class="ref" x="1982" y="1251">Q1</text>
      <text class="ref" transform="translate(1620 1316) rotate(-90)">SW2</text>
      <text class="ref" transform="translate(1931 1338) rotate(-90)">C2</text>
      <text class="ref back" transform="translate(2188 925) scale(-1 1)">BT1</text>
      <text class="ref title" x="1498" y="1026">JAMES E. HARKINS</text>
      <text class="ref title" x="1498" y="1063">AUDIO DESIGNS</text>
      <text class="ref rev" x="735" y="1278">rev. 1 090223</text>
    </svg>`;
  }
}

/* ---------- side panel ---------- */
@customElement("side-panel")
class SidePanel extends LitElement {
  @state() private tab = "Layers";

  static styles = [buttonStyles, css`
    :host { display: flex; flex-direction: column; overflow: hidden; font-size: 22px; line-height: 30px; color: #e6e6e6; }
    .head { flex: none; height: 30px; padding-left: 5px; background: #202020; color: #5e5e5e; font-size: 21px; }
    .body { flex: 1; display: flex; flex-direction: column; min-height: 0; padding: 27px 14px 17px 10px; border-left: 2px solid #858585; }
    .tabs {
      position: relative; z-index: 1; flex: none; display: grid; grid-template-columns: 104px 1fr 1fr; height: 38px;
      margin: 0 -3px -19px 5px; box-sizing: border-box; border: 1px solid #4d4d4d; border-bottom-color: #626262;
      border-radius: 10px; background: #393939; font-weight: 500; font-size: 21px;
    }
    .tab { border-radius: 9px; }
    .tab.on { background: #6d6d6d; }
    .group {
      flex: 1; display: flex; flex-direction: column; min-height: 0; box-sizing: border-box; padding: 28px 3px 0 4px;
      border: 2px solid #484848; border-radius: 10px; background: #373737;
    }
    .list { flex: 1; min-height: 0; background: #e9e9e9; }
    .rows { margin: 0; padding: 0; list-style: none; display: grid; grid-auto-rows: 1fr; height: 952px; }
    .row { display: grid; grid-template-columns: 12px 29px 29px 1fr; align-items: center; padding-left: 11px; column-gap: 10px; color: #fcfcfc; font-size: 21px; font-weight: 500; }
    .row.on { background: #fcfcfc; }
    .mark { width: 12px; height: 18px; }
    .swatch { height: 20px; box-shadow: inset 0 0 0 1px rgba(0, 0, 0, 0.08); }
    .eye, .eyeicon { display: block; width: 29px; height: 29px; }
    .layer { padding-left: 4px; }
    .more { display: flex; align-items: center; height: 43px; padding-left: 8px; text-align: left; }
    .caret { width: 8px; height: 16px; margin-right: 6px; }
    .presets { padding: 2px 0 1px 5px; }
    .pick { flex: none; margin-right: 1px; }
    .filter { flex: none; margin-top: 14px; }
    .checks {
      flex: none; display: grid; grid-template-columns: 186px 1fr; grid-auto-rows: 33px; height: 215px; box-sizing: border-box;
      padding: 9px 0 0 10px; border-left: 2px solid #858585; overflow: hidden;
    }
    .check { display: grid; grid-template-columns: 26px 1fr; column-gap: 12px; align-items: center; white-space: nowrap; }
    .box { appearance: none; grid-area: 1 / 1; width: 26px; height: 26px; border-radius: 6px; background: linear-gradient(#2180ec, #156fd6); }
    .tick { grid-area: 1 / 1; width: 26px; height: 26px; pointer-events: none; }
  `];

  private eye(off?: boolean) {
    return off
      ? svg`<circle cx="14.5" cy="14.5" r="14.5" fill="#b9b9b9"/><path d="M3 14.5q11.5-13 23 0-11.5 13-23 0z" fill="#f2f2f2"/><path d="M6 21 23 7.5" stroke="#4a4a4a" stroke-width="2.5"/>`
      : svg`<circle cx="14.5" cy="14.5" r="14.5" fill="#535353"/><path d="M3 14.5q11.5-13 23 0-11.5 13-23 0z" fill="#f2f2f2"/><circle cx="14.5" cy="14.5" r="4.500" fill="#8a8a8a"/><circle cx="14.5" cy="14.5" r="2" fill="#fff" stroke="#555"/>`;
  }

  private check(name: string) {
    return html`<label class="check"><input class="box" type="checkbox" checked><svg class="tick" viewBox="0 0 26 26"><path d="M6 14l5 6L20 6.5" fill="none" stroke="#fff" stroke-width="3.2" stroke-linecap="round" stroke-linejoin="round"/></svg>${name}</label>`;
  }

  render() {
    return html`
      <div class="head">Appearance</div>
      <section class="body">
        <div class="tabs" role="tablist">
          ${["Layers", "Obje...", "Nets"].map((n) => html`<button role="tab" aria-selected=${this.tab === n ? "true" : "false"} class=${classMap({ tab: true, on: this.tab === n })} @click=${() => (this.tab = n)}>${n}</button>`)}
        </div>
        <div class="group">
          <div class="list"><ul class="rows">
            ${LAYERS.map(([name, color, off], i) => html`<li class=${classMap({ row: true, on: i === 0 })}>
              ${i === 0 ? html`<svg class="mark" viewBox="0 0 12 18"><path d="M0 0 12 9 0 18z" fill="#3f3ffb"/></svg>` : html`<span></span>`}
              <span class="swatch" style=${styleMap({ background: color })}></span>
              <button class="eye" aria-label=${"Toggle " + name}><svg class="eyeicon" viewBox="0 0 29 29">${this.eye(off)}</svg></button>
              <span class="layer">${name}</span></li>`)}
          </ul></div>
          <button class="more"><svg class="caret" viewBox="0 0 8 16"><path d="M0 0 8 8 0 16z" fill="#f2f2f2"/></svg>Layer Display Options</button>
        </div>
        <div class="presets">Presets (Ctrl+Tab):</div>
        <pop-select class="pick" label="Presets" value="-----"></pop-select>
      </section>
      <div class="head filter">Selection Filter</div>
      <section class="checks">
        ${[["All items", "Locked items"], ["Footprints", "Text"], ["Tracks", "Vias"], ["Pads", "Graphics"], ["Zones", "Rule Areas"], ["Dimensions", "Other items"]]
          .flat().map((n) => this.check(n))}
      </section>`;
  }
}

/* ---------- editor window ---------- */
@customElement("app-root")
class AppRoot extends LitElement {
  static styles = [buttonStyles, css`
    :host {
      display: flex; box-sizing: border-box; min-height: 100vh; padding: 68px 102px 134px; background: #fff; overflow: hidden;
      font-family: Inter, "Liberation Sans", sans-serif; font-size: 22px; color: #e8e8e8;
    }
    .frame { flex: 1; min-width: 0; display: flex; border-radius: 20px; box-shadow: 0 0 0 1px #1c1c1c, 0 50px 82px rgba(0, 0, 0, 0.62), 0 0 8px rgba(0, 0, 0, 0.3); }
    .window {
      position: relative; flex: 1; min-width: 0; display: flex; flex-direction: column; overflow: hidden;
      border-radius: 20px; background: #323232;
    }
    .window::after { content: ""; position: absolute; inset: 0; border-radius: 20px; box-shadow: inset 0 2px 0 #6c6e6e, inset 0 0 0 2px rgba(255, 255, 255, 0.2); pointer-events: none; }
    .titlebar { display: grid; grid-template-columns: 1fr auto 1fr; align-items: center; height: 53px; padding: 0 14px; background: #383a3a; border-bottom: 1px solid #141414; }
    .lights { display: flex; gap: 13px; }
    .light { width: 23px; height: 23px; border-radius: 50%; background: #ff5f57; }
    .light.min { background: #febc2e; }
    .light.max { background: #28c840; }
    .name { margin: 0; font-size: 24px; font-weight: 600; color: #b6b8b8; }
    .bar { display: flex; align-items: center; gap: 4px; height: 59px; padding-left: 9px; }
    .options { padding: 0 0 5px 10px; }
    .sep { flex: none; width: 14px; height: 40px; background: linear-gradient(#1e1e1e, #1e1e1e) center / 2px 100% no-repeat; }
    .combo { display: flex; align-items: center; gap: 10px; width: 268px; height: 40px; margin: 0 4px 0 -4px; padding-left: 9px; box-sizing: border-box; border: 2px solid #858585; background: #1d1d1d; }
    .chip { flex: none; width: 24px; height: 24px; background: #c83434; box-shadow: 0 0 0 1px #000; }
    .entry { flex: 1; min-width: 0; padding: 0; border: 0; background: none; color: #f0f0f0; }
    .drop { flex: none; width: 37px; height: 37px; margin-right: 2px; border-radius: 9px; background: #fff; }
    .dropicon { display: block; width: 37px; height: 37px; }
    .main { flex: 1; display: flex; min-height: 0; }
    .rail { flex: none; display: flex; flex-direction: column; gap: 4px; padding: 8px 0 0 3px; width: 61px; box-sizing: content-box; }
    .rail.right { width: 72px; padding-left: 4px; }
    .rule { flex: none; width: 40px; height: 14px; margin-left: 8px; background: linear-gradient(#1e1e1e, #1e1e1e) center / 100% 2px no-repeat; }
    .view { flex: 1; min-width: 0; display: grid; grid-template: minmax(0, 1fr) 29px / minmax(0, 1fr) 30px; background: #0f0f0f; }
    .vscroll { display: flex; flex-direction: column; align-items: center; border-left: 2px solid #2b2b2b; }
    .hscroll { display: flex; align-items: center; border-top: 2px solid #2b2b2b; }
    .before { flex: 1042; }
    .after { flex: 957; }
    .hscroll .before { flex: 1633; }
    .hscroll .after { flex: 1345; }
    .thumb { border-radius: 8px; background: #8a8a8a; }
    .vscroll .thumb { width: 16px; height: 42px; }
    .hscroll .thumb { width: 160px; height: 16px; }
    .corner { background: #000; }
    .panel { flex: none; width: 328px; }
    .stats { display: flex; gap: 55px; height: 56px; box-sizing: border-box; margin: 0; padding: 5px 20px 0; font-size: 20px; line-height: 26px; color: #f0f0f0; }
    .stats dd { margin: 0; }
    .status {
      display: grid; grid-template-columns: 1fr 129px 287px 458px 328px 612px; align-items: center; height: 44px; padding: 0 0 2px 9px;
      border-top: 2px solid #0c0c0c; box-sizing: border-box; background: linear-gradient(#303031, #292929); color: #ababab; font-size: 20px; white-space: pre;
    }
    .w1 { width: 334px; } .w2 { width: 322px; } .w3 { width: 422px; } .w4 { width: 205px; }
  `];

  private tools(list: Tool[], sep: string) {
    return list.map((x) => x.icon
      ? html`<tool-button .icon=${x.icon} .label=${x.label ?? ""} .on=${!!x.on} .more=${!!x.more}></tool-button>`
      : html`<span class=${sep}></span>`);
  }

  render() {
    const sep = html`<span class="sep"></span>`;
    return html`<div class="frame"><div class="window">
      <header class="titlebar">
        <div class="lights"><button class="light" aria-label="Close"></button><button class="light min" aria-label="Minimize"></button><button class="light max" aria-label="Zoom"></button></div>
        <h1 class="name">*FETpreamp — PCB Editor</h1>
      </header>
      <nav class="bar" aria-label="Main toolbar">
        ${this.tools(TOP_TOOLS, "sep")}
        <label class="combo"><span class="chip"></span><input class="entry" aria-label="Active layer" .value=${"F.Cu (PgUp)"}></label>
        <button class="drop" aria-label="Choose layer"><svg class="dropicon" viewBox="0 0 37 37"><path d="M13 16l5.5 6 5.5-6" fill="none" stroke="#111" stroke-width="3"/></svg></button>
        ${this.tools(TOP_TOOLS_END, "sep")}
      </nav>
      <nav class="bar options" aria-label="Drawing options">
        <pop-select class="w1" label="Track width" value="Track: use netclass width"></pop-select>
        <tool-button .icon=${"autow"} .label=${"Use existing track width"} .on=${true}></tool-button>
        ${sep}<pop-select class="w2" label="Via size" value="Via: use netclass sizes"></pop-select>
        ${sep}<pop-select class="w3" label="Grid" value="Grid: 0.2540 mm (0.0100 in)"></pop-select>
        ${sep}<pop-select class="w4" label="Zoom" value="Zoom Auto"></pop-select>
      </nav>
      <main class="main">
        <nav class="rail" aria-label="View options">${this.tools(LEFT_TOOLS, "rule")}</nav>
        <div class="view">
          <board-view></board-view>
          <div class="vscroll"><span class="before"></span><span class="thumb"></span><span class="after"></span></div>
          <div class="hscroll"><span class="before"></span><span class="thumb"></span><span class="after"></span></div>
          <div class="corner"></div>
        </div>
        <nav class="rail right" aria-label="Drawing tools">${this.tools(RIGHT_TOOLS, "rule")}</nav>
        <side-panel class="panel"></side-panel>
      </main>
      <dl class="stats">
        ${[["Pads", "37"], ["Vias", "2"], ["Track Segments", "63"], ["Nets", "13"], ["Unrouted", "0"]].map(([k, v]) => html`<div><dt>${k}</dt><dd>${v}</dd></div>`)}
      </dl>
      <footer class="status">
        <span>File '/Users/jamesharkins/Documents/AuEn/FETpreamp/_autosave-FETpreamp.kicad_pcb' saved.</span>
        <span>Z 3.48</span><span>X 102.6160  Y 42.4180</span><span>dx 102.6160  dy 42.4180  dist 111.0375</span><span>grid X 0.2540  Y 0.2540</span><span>mm</span>
      </footer>
    </div></div>`;
  }
}
